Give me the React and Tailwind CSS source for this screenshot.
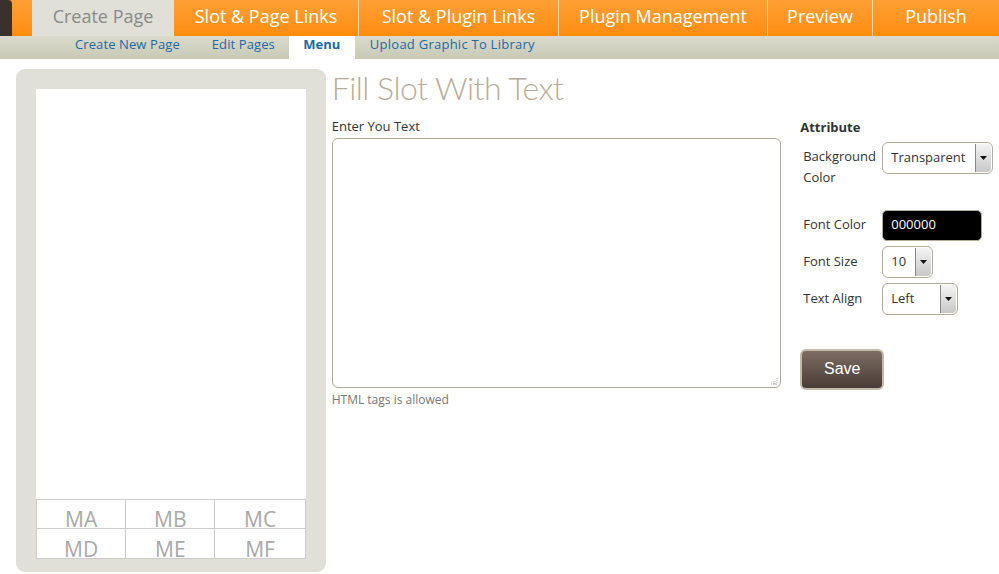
import React from 'react';

const mainTabs = ['Slot & Page Links', 'Slot & Plugin Links', 'Plugin Management', 'Preview', 'Publish'];
const tabWidths = ['w-[185px]', 'w-[200px]', 'w-[209px]', 'w-[105px]', 'w-[126px]'];
const cells = ['MA', 'MB', 'MC', 'MD', 'ME', 'MF'];

function Arrow() {
  return (
    <span className="flex items-center justify-center w-[16px] h-full border-l border-[#888] bg-gradient-to-b from-[#f4f4f4] to-[#c8c8c8] rounded-r-[4px]">
      <svg width="7" height="4" viewBox="0 0 7 4"><path d="M0 0h7L3.5 4z" fill="#111" /></svg>
    </span>
  );
}

function FakeSelect({ value, width }) {
  return (
    <div className={`flex items-stretch h-[32px] ${width} border border-[#b5ab9c] rounded-[6px] bg-white overflow-hidden`}>
      <span className="flex-1 flex items-center pl-[8px] text-[13px] text-[#333]">{value}</span>
      <div className="py-[1px] pr-[1px]"><Arrow /></div>
    </div>
  );
}

export default function App() {
  return (
    <div className="w-[999px] h-[574px] overflow-hidden bg-white font-['Open_Sans',sans-serif]">
      {/* main nav */}
      <div className="flex h-[36px] bg-gradient-to-b from-[#ffa033] to-[#ff8c0a]">
        <div className="w-[12px] bg-[#3a302c] rounded-tr-[4px]" />
        <div className="w-[20px]" />
        <div className="w-[142px] flex items-center justify-center pb-[3px] bg-[#e0dfd8] text-[#8a8a8a] text-[18px]">Create Page</div>
        {mainTabs.map((t, i) => (
          <div
            key={t}
            className={`${tabWidths[i]} flex items-center justify-center pb-[3px] text-white text-[18px] ${i < mainTabs.length - 1 ? 'border-r border-[#ffd9a8]' : ''}`}
          >
            {t}
          </div>
        ))}
      </div>
      {/* sub nav */}
      <div className="flex h-[23px] bg-gradient-to-b from-[#dadacc] to-[#c9c9b6] text-[13px] leading-[16px] text-[#1b6aa5] pl-[75px]">
        <span className="tracking-[0.1px]">Create New Page</span>
        <span className="ml-[32px] tracking-[0.1px]">Edit Pages</span>
        <span className="ml-[14px] w-[66px] text-center bg-white font-bold">Menu</span>
        <span className="ml-[15px] tracking-[0.25px]">Upload Graphic To Library</span>
      </div>

      <div className="flex pt-[10px]">
        {/* left preview panel */}
        <div className="ml-[16px] w-[310px] h-[503px] bg-[#e0dfd8] rounded-[9px] px-[20px] pt-[20px]">
          <div className="h-[410px] bg-white" />
          <div className="grid grid-cols-3 border border-[#cccccc] bg-white">
            {cells.map((c, i) => (
              <div
                key={c}
                className={`h-[29px] flex items-end justify-center text-[21px] leading-none text-[#a8a8a8] border-[#cccccc] ${i % 3 < 2 ? 'border-r' : ''} ${i < 3 ? 'border-b' : ''}`}
              >
                <span className="-mb-[2px]">{c}</span>
              </div>
            ))}
          </div>
        </div>

        {/* editor */}
        <div className="ml-[6px] w-[450px]">
          <h1 className="text-[32px] leading-[40px] font-light text-[#b7ac9c] font-['Lato',sans-serif] tracking-[-0.5px] mt-[-1px]">Fill Slot With Text</h1>
          <div className="text-[13px] text-[#333] mt-[9px]">Enter You Text</div>
          <div className="relative mt-[1px] h-[250px] border border-[#b0a797] rounded-[6px]">
            <svg className="absolute right-[2px] bottom-[2px]" width="8" height="8" viewBox="0 0 8 8">
              <path d="M7 1v6M4 4v3M1 7h6M4 7h3" stroke="#aaa" strokeWidth="1" strokeDasharray="1 1" fill="none" />
            </svg>
          </div>
          <div className="text-[12px] text-[#777] mt-[3px]">HTML tags is allowed</div>
        </div>

        {/* attributes */}
        <div className="ml-[19px] w-[199px] pt-[49px] text-[13px] text-[#333]">
          <div className="font-bold">Attribute</div>
          <div className="flex mt-[4px] pl-[3px]">
            <div className="w-[79px] leading-[21px] pt-[4px]">Background Color</div>
            <FakeSelect value="Transparent" width="w-[111px]" />
          </div>
          <div className="flex items-center mt-[22px] pl-[3px]">
            <div className="w-[79px]">Font Color</div>
            <div className="w-[100px] h-[31px] bg-black rounded-[5px] border border-[#b5ab9c] text-white flex items-center pl-[8px]">000000</div>
          </div>
          <div className="flex items-center mt-[5px] pl-[3px]">
            <div className="w-[79px]">Font Size</div>
            <FakeSelect value="10" width="w-[51px]" />
          </div>
          <div className="flex items-center mt-[5px] pl-[3px]">
            <div className="w-[79px]">Text Align</div>
            <FakeSelect value="Left" width="w-[76px]" />
          </div>
          <button className="mt-[34px] w-[84px] h-[41px] rounded-[6px] border-2 border-[#c3baaa] bg-gradient-to-b from-[#7d6d63] to-[#4a3d37] text-white text-[16px] font-['Liberation_Sans',sans-serif]">
            Save
          </button>
        </div>
      </div>
    </div>
  );
}
